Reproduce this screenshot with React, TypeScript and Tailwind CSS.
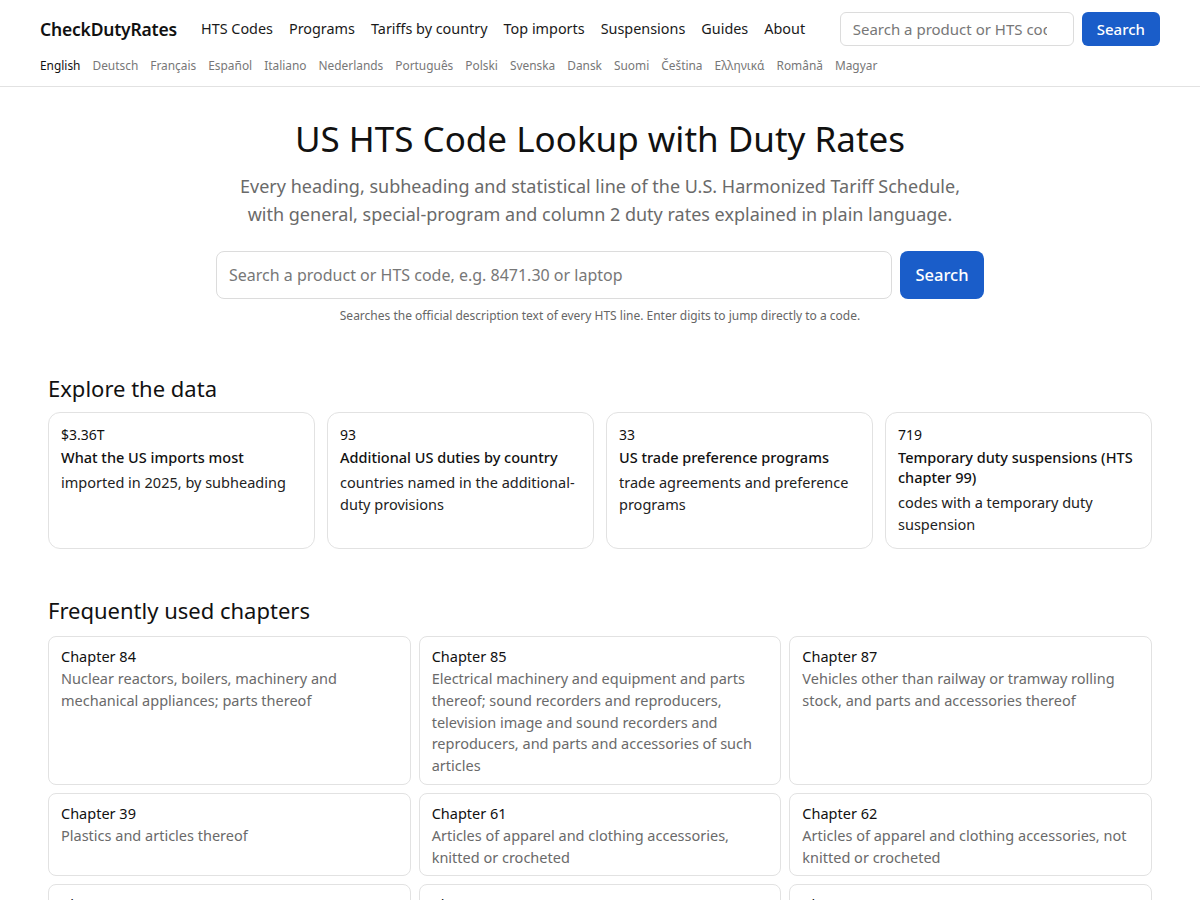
import React from 'react';

const navLinks = ['HTS Codes', 'Programs', 'Tariffs by country', 'Top imports', 'Suspensions', 'Guides', 'About'];

const languages = [
  'English', 'Deutsch', 'Français', 'Español', 'Italiano', 'Nederlands', 'Português', 'Polski',
  'Svenska', 'Dansk', 'Suomi', 'Čeština', 'Ελληνικά', 'Română', 'Magyar',
];

const stats = [
  { value: '$3.36T', title: 'What the US imports most', text: 'imported in 2025, by subheading' },
  { value: '93', title: 'Additional US duties by country', text: 'countries named in the additional-duty provisions' },
  { value: '33', title: 'US trade preference programs', text: 'trade agreements and preference programs' },
  { value: '719', title: 'Temporary duty suspensions (HTS chapter 99)', text: 'codes with a temporary duty suspension' },
];

const chapters = [
  { num: 84, text: 'Nuclear reactors, boilers, machinery and mechanical appliances; parts thereof' },
  { num: 85, text: 'Electrical machinery and equipment and parts thereof; sound recorders and reproducers, television image and sound recorders and reproducers, and parts and accessories of such articles' },
  { num: 87, text: 'Vehicles other than railway or tramway rolling stock, and parts and accessories thereof' },
  { num: 39, text: 'Plastics and articles thereof' },
  { num: 61, text: 'Articles of apparel and clothing accessories, knitted or crocheted' },
  { num: 62, text: 'Articles of apparel and clothing accessories, not knitted or crocheted' },
  { num: 73, text: 'Articles of iron or steel' },
  { num: 94, text: 'Furniture; bedding, mattresses, mattress supports, cushions and similar stuffed furnishings' },
  { num: 90, text: 'Optical, photographic, cinematographic, measuring, checking, precision, medical or surgical instruments' },
];

const Header: React.FC = () => (
  <header className="border-b border-[#e2e2e2] px-10 pt-3 pb-[13px]">
    <div className="flex items-center whitespace-nowrap">
      <a className="shrink-0 text-[17.5px] font-semibold tracking-[-0.2px] text-[#111]">CheckDutyRates</a>
      <nav className="ml-6 flex shrink-0 gap-4 text-[14.4px] text-[#1a1a1a]">
        {navLinks.map((l) => (
          <a key={l}>{l}</a>
        ))}
      </nav>
      <div className="ml-auto flex gap-2">
        <input
          className="h-[34px] w-[234px] rounded-md border border-[#dcdcdc] pl-3 pr-[26px] text-[15px] text-[#111] outline-none placeholder:text-[#777]"
          placeholder="Search a product or HTS code"
        />
        <button className="h-[34px] rounded-md bg-[#1a5dc9] px-[15px] text-[15px] font-medium text-white">Search</button>
      </div>
    </div>
    <div className="mt-[11px] flex gap-3 text-[11.9px] leading-4 text-[#777]">
      {languages.map((l, i) => (
        <a key={l} className={i === 0 ? 'text-[#111]' : ''}>{l}</a>
      ))}
    </div>
  </header>
);

const Hero: React.FC = () => (
  <section className="flex flex-col items-center pt-[26px] text-center">
    <h1 className="text-[35px] leading-[52px] text-[#111]">US HTS Code Lookup with Duty Rates</h1>
    <p className="mt-[7px] max-w-[740px] text-[18px] leading-[28px] text-[#6a6a6a]">
      Every heading, subheading and statistical line of the U.S. Harmonized Tariff Schedule, with general,
      special-program and column 2 duty rates explained in plain language.
    </p>
    <div className="mt-[23px] flex w-[768px] gap-2">
      <input
        className="h-12 flex-1 rounded-lg border border-[#dcdcdc] px-3 text-[16px] text-[#111] outline-none placeholder:text-[#777]"
        placeholder="Search a product or HTS code, e.g. 8471.30 or laptop"
      />
      <button className="h-12 w-[84px] rounded-lg bg-[#1a5dc9] text-[16.5px] font-medium text-white">Search</button>
    </div>
    <p className="mt-[7px] text-[12px] leading-5 text-[#666]">
      Searches the official description text of every HTS line. Enter digits to jump directly to a code.
    </p>
  </section>
);

const App: React.FC = () => {
  return (
    <div className="min-h-[900px] bg-white text-[#111]" style={{ fontFamily: '"Noto Sans", "Open Sans", sans-serif' }}>
      <Header />
      <main className="px-12">
        <Hero />

        <h2 className="mt-[46px] text-[22px] leading-8">Explore the data</h2>
        <div className="mt-[8px] grid grid-cols-4 gap-3">
          {stats.map((s) => (
            <a key={s.value} className="block h-[137px] rounded-xl border border-[#e2e2e2] px-3 pt-[12px]">
              <div className="text-[14px] leading-5">{s.value}</div>
              <div className="mt-[2px] text-[14.5px] font-medium leading-5">{s.title}</div>
              <div className="mt-[4px] text-[14.5px] leading-[22px] text-[#222]">{s.text}</div>
            </a>
          ))}
        </div>

        <h2 className="mt-[45px] text-[22px] leading-8">Frequently used chapters</h2>
        <div className="mt-[10px] grid grid-cols-3 gap-2">
          {chapters.map((c) => (
            <a key={c.num} className="block rounded-lg border border-[#e2e2e2] px-3 pt-[9px] pb-[7px]">
              <div className="text-[14.5px] leading-5">Chapter {c.num}</div>
              <div className="mt-[2px] text-[14.5px] leading-[21.75px] text-[#6a6a6a]">{c.text}</div>
            </a>
          ))}
        </div>
      </main>
    </div>
  );
};

export default App;
